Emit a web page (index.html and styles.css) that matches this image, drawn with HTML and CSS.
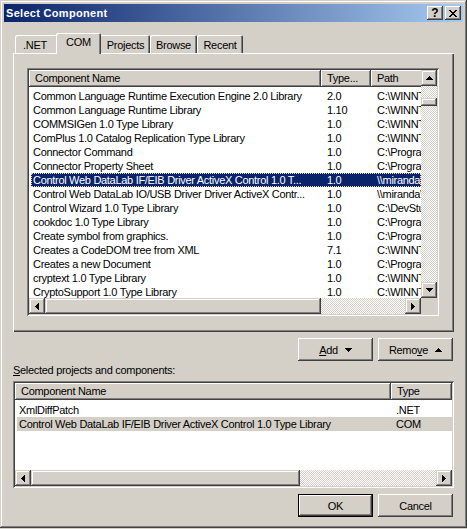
FILE: index.html
```html
<!DOCTYPE html>
<html lang="en">
<head>
<meta charset="UTF-8">
<title>Select Component</title>
<link rel="stylesheet" href="styles.css">
</head>
<body>
<div class="window">
  <div class="titlebar">
    <span class="title">Select Component</span>
    <div class="caption-btns">
      <span class="cap-btn help">?</span>
      <span class="cap-btn">
        <svg width="8" height="7" viewBox="0 0 8 7"><path d="M0 0h2v1H0zM6 0h2v1H6zM1 1h2v1H1zM5 1h2v1H5zM2 2h4v1H2zM3 3h2v1H3zM2 4h4v1H2zM1 5h2v1H1zM5 5h2v1H5zM0 6h2v1H0zM6 6h2v1H6z"/></svg>
      </span>
    </div>
  </div>

  <div class="content">
    <div class="tabs">
      <div class="tab tab-net">.NET</div>
      <div class="tab tab-com active">COM</div>
      <div class="tab tab-projects">Projects</div>
      <div class="tab tab-browse">Browse</div>
      <div class="tab tab-recent">Recent</div>
    </div>

    <div class="tab-panel">
      <div class="listview lv-com">
        <div class="lv-main">
          <div class="lv-header">
            <div class="hd c1">Component Name</div>
            <div class="hd c2">Type...</div>
            <div class="hd c3">Path</div>
          </div>
          <div class="lv-rows">
            <div class="row"><span class="c1">Common Language Runtime Execution Engine 2.0 Library</span><span class="c2">2.0</span><span class="c3">C:\WINNT\System32\mscoree.tlb</span></div>
            <div class="row"><span class="c1">Common Language Runtime Library</span><span class="c2">1.10</span><span class="c3">C:\WINNT\Microsoft.NET\mscorlib.tlb</span></div>
            <div class="row"><span class="c1">COMMSIGen 1.0 Type Library</span><span class="c2">1.0</span><span class="c3">C:\WINNT\System32\msigen.dll</span></div>
            <div class="row"><span class="c1">ComPlus 1.0 Catalog Replication Type Library</span><span class="c2">1.0</span><span class="c3">C:\WINNT\System32\comrepl.dll</span></div>
            <div class="row"><span class="c1">Connector Command</span><span class="c2">1.0</span><span class="c3">C:\Program Files\Connector\cmd.dll</span></div>
            <div class="row"><span class="c1">Connector Property Sheet</span><span class="c2">1.0</span><span class="c3">C:\Program Files\Connector\prop.dll</span></div>
            <div class="row selected"><span class="c1">Control Web DataLab IF/EIB Driver ActiveX Control 1.0 T...</span><span class="c2">1.0</span><span class="c3">\\miranda\cw\dlabeib.ocx</span></div>
            <div class="row"><span class="c1">Control Web DataLab IO/USB Driver Driver ActiveX Contr...</span><span class="c2">1.0</span><span class="c3">\\miranda\cw\dlabusb.ocx</span></div>
            <div class="row"><span class="c1">Control Wizard 1.0 Type Library</span><span class="c2">1.0</span><span class="c3">C:\DevStudio\ctlwiz.tlb</span></div>
            <div class="row"><span class="c1">cookdoc 1.0 Type Library</span><span class="c2">1.0</span><span class="c3">C:\Program Files\cookdoc.dll</span></div>
            <div class="row"><span class="c1">Create symbol from graphics.</span><span class="c2">1.0</span><span class="c3">C:\Program Files\symbol.dll</span></div>
            <div class="row"><span class="c1">Creates a CodeDOM tree from XML</span><span class="c2">7.1</span><span class="c3">C:\WINNT\Microsoft.NET\xmldom.tlb</span></div>
            <div class="row"><span class="c1">Creates a new Document</span><span class="c2">1.0</span><span class="c3">C:\Program Files\newdoc.dll</span></div>
            <div class="row"><span class="c1">cryptext 1.0 Type Library</span><span class="c2">1.0</span><span class="c3">C:\WINNT\System32\cryptext.dll</span></div>
            <div class="row"><span class="c1">CryptoSupport 1.0 Type Library</span><span class="c2">1.0</span><span class="c3">C:\WINNT\System32\crypto.dll</span></div>
          </div>
        </div>
        <div class="vscroll">
          <div class="sb-btn"><svg width="7" height="4" viewBox="0 0 7 4"><path d="M3 0h1v1h1v1h1v1h1v1H0V3h1V2h1V1h1z"/></svg></div>
          <div class="sb-track"><div class="sb-thumb v"></div></div>
          <div class="sb-btn"><svg width="7" height="4" viewBox="0 0 7 4"><path d="M0 0h7v1H6v1H5v1H4v1H3V3H2V2H1V1H0z"/></svg></div>
        </div>
        <div class="hscroll">
          <div class="sb-btn"><svg width="4" height="7" viewBox="0 0 4 7"><path d="M3 0h1v7H3V6H2V5H1V4H0V3h1V2h1V1h1z"/></svg></div>
          <div class="sb-thumb h1"></div>
          <div class="sb-track"></div>
          <div class="sb-btn"><svg width="4" height="7" viewBox="0 0 4 7"><path d="M0 0h1v1h1v1h1v1h1v1H3v1H2v1H1v1H0z"/></svg></div>
        </div>
        <div class="corner"></div>
      </div>
    </div>

    <div class="btn-row">
      <button class="btn"><span><u>A</u>dd</span><svg width="7" height="4" viewBox="0 0 7 4"><path d="M0 0h7v1H6v1H5v1H4v1H3V3H2V2H1V1H0z"/></svg></button>
      <button class="btn"><span>Remo<u>v</u>e</span><svg width="7" height="4" viewBox="0 0 7 4"><path d="M3 0h1v1h1v1h1v1h1v1H0V3h1V2h1V1h1z"/></svg></button>
    </div>

    <div class="label"><u>S</u>elected projects and components:</div>

    <div class="listview lv-sel">
      <div class="lv-main">
        <div class="lv-header">
          <div class="hd c1">Component Name</div>
          <div class="hd c2">Type</div>
        </div>
        <div class="lv-rows">
          <div class="row"><span class="c1">XmlDiffPatch</span><span class="c2">.NET</span></div>
          <div class="row inactive"><span class="c1">Control Web DataLab IF/EIB Driver ActiveX Control 1.0 Type Library</span><span class="c2">COM</span></div>
        </div>
      </div>
      <div class="hscroll">
        <div class="sb-btn"><svg width="4" height="7" viewBox="0 0 4 7"><path d="M3 0h1v7H3V6H2V5H1V4H0V3h1V2h1V1h1z"/></svg></div>
        <div class="sb-thumb h2"></div>
        <div class="sb-track"></div>
        <div class="sb-btn"><svg width="4" height="7" viewBox="0 0 4 7"><path d="M0 0h1v1h1v1h1v1h1v1H3v1H2v1H1v1H0z"/></svg></div>
      </div>
    </div>

    <div class="btn-row bottom">
      <button class="btn default">OK</button>
      <button class="btn">Cancel</button>
    </div>
  </div>
</div>
</body>
</html>
```

FILE: styles.css
```css
* {
    box-sizing: border-box;
}
body {
    margin: 0;
    background: #d4d0c8;
    font-family: Tahoma, "Liberation Sans", "DejaVu Sans", sans-serif;
    font-size: 11px;
    letter-spacing: -0.3px;
    color: #000;
}
.window {
    width: 467px;
    height: 528px;
    padding: 4px;
    background: #d4d0c8;
    box-shadow: inset -1px -1px #404040, inset 1px 1px #d4d0c8,
                inset -2px -2px #808080, inset 2px 2px #fff;
}

/* caption */
.titlebar {
    height: 18px;
    padding: 0 2px;
    display: flex;
    align-items: center;
    justify-content: space-between;
    background: linear-gradient(to right, #0a246a, #a6caf0);
    color: #fff;
    font-weight: bold;
}
.title {
    letter-spacing: 0.3px;
}
.caption-btns {
    display: flex;
    gap: 2px;
}
.cap-btn {
    width: 16px;
    height: 14px;
    display: flex;
    align-items: center;
    justify-content: center;
    background: #d4d0c8;
    color: #000;
    box-shadow: inset -1px -1px #404040, inset 1px 1px #fff,
                inset -2px -2px #808080;
}
.cap-btn.help {
    font-size: 12px;
    line-height: 14px;
    letter-spacing: 0;
}

.content {
    padding: 11px 9px 0;
}

/* tab strip */
.tabs {
    display: flex;
    align-items: flex-end;
    height: 20px;
    padding-left: 2px;
}
.tab {
    height: 18px;
    padding-top: 4px;
    text-align: center;
    background: #d4d0c8;
    border-radius: 2px 2px 0 0;
    box-shadow: inset 1px 1px #fff, inset -1px 0 #404040, inset -2px 0 #808080;
}
.tab.active {
    position: relative;
    z-index: 1;
    height: 21px;
    margin: 0 -2px -1px;
    padding-top: 3px;
}
.tab-net { width: 43px; padding-right: 3px; }
.tab-com { width: 45px; }
.tab-projects { width: 51px; padding-left: 2px; }
.tab-browse { width: 47px; }
.tab-recent { width: 46px; }

.tab-panel {
    height: 279px;
    padding: 15px 0 0 14px;
    box-shadow: inset 1px 1px #fff, inset -1px -1px #404040, inset -2px -2px #808080;
}

/* list views */
.listview {
    display: grid;
    padding: 2px;
    background: #fff;
    box-shadow: inset 1px 1px #808080, inset -1px -1px #fff,
                inset 2px 2px #404040, inset -2px -2px #d4d0c8;
}
.lv-com {
    width: 412px;
    height: 248px;
    grid-template-columns: 1fr 16px;
    grid-template-rows: 1fr 16px;
}
.lv-sel {
    width: 441px;
    height: 107px;
    margin-top: 4px;
    grid-template-columns: 1fr;
    grid-template-rows: 1fr 16px;
}
.lv-main {
    overflow: hidden;
    white-space: nowrap;
}
.lv-header {
    display: flex;
    height: 17px;
    background: #d4d0c8;
}
.hd {
    flex: none;
    height: 17px;
    line-height: 16px;
    padding-left: 6px;
    overflow: hidden;
    box-shadow: inset -1px -1px #404040, inset 1px 1px #fff, inset -2px -2px #808080;
}
.lv-rows {
    padding-top: 2px;
}
.lv-sel .lv-rows {
    padding-top: 3px;
}
.row {
    display: flex;
    height: 14px;
    line-height: 14px;
    margin-left: 2px;
}
.row span {
    flex: none;
    overflow: hidden;
}
.row .c1 {
    padding-left: 2px;
}
.row .c2,
.row .c3 {
    padding-left: 6px;
}
.row.selected {
    background: #0a246a;
    color: #fff;
    outline: 1px dotted #f5db95;
    outline-offset: -1px;
}
.row.inactive {
    background: #d4d0c8;
}

.lv-com .hd.c1 { width: 292px; }
.lv-com .hd.c2 { width: 50px; }
.lv-com .hd.c3 { width: 60px; }
.lv-com .row .c1 { width: 290px; }
.lv-com .row .c2 { width: 50px; }
.lv-com .row .c3 { width: 120px; }

.lv-sel .hd.c1 { width: 376px; }
.lv-sel .hd.c2 { flex: 1; }
.lv-sel .row .c1 { width: 374px; }
.lv-sel .row .c2 { padding-left: 5px; }

/* scroll bars */
.vscroll {
    display: flex;
    flex-direction: column;
}
.hscroll {
    display: flex;
}
.sb-btn {
    flex: none;
    width: 16px;
    height: 16px;
    display: flex;
    align-items: center;
    justify-content: center;
    background: #d4d0c8;
    box-shadow: inset -1px -1px #404040, inset 1px 1px #d4d0c8,
                inset -2px -2px #808080, inset 2px 2px #fff;
}
.sb-track {
    flex: 1;
    background: repeating-conic-gradient(#d4d0c8 0 25%, #fff 0 50%) 0 0 / 2px 2px;
}
.sb-thumb {
    flex: none;
    background: #d4d0c8;
    box-shadow: inset -1px -1px #404040, inset 1px 1px #d4d0c8,
                inset -2px -2px #808080, inset 2px 2px #fff;
}
.sb-thumb.v {
    height: 8px;
    margin-top: 12px;
}
.sb-thumb.h1 { width: 276px; }
.sb-thumb.h2 { width: 269px; }
.corner {
    background: #d4d0c8;
}

/* push buttons */
.btn-row {
    display: flex;
    justify-content: flex-end;
    gap: 5px;
    margin: 6px 1px 0 0;
}
.btn {
    width: 75px;
    height: 23px;
    display: flex;
    align-items: center;
    justify-content: center;
    gap: 7px;
    padding: 0;
    border: 0;
    font: inherit;
    letter-spacing: inherit;
    color: #000;
    background: #d4d0c8;
    box-shadow: inset -1px -1px #404040, inset 1px 1px #fff, inset -2px -2px #808080;
}
.btn.default {
    border: 1px solid #000;
}
.label {
    margin-top: 2px;
    line-height: 14px;
}
```
